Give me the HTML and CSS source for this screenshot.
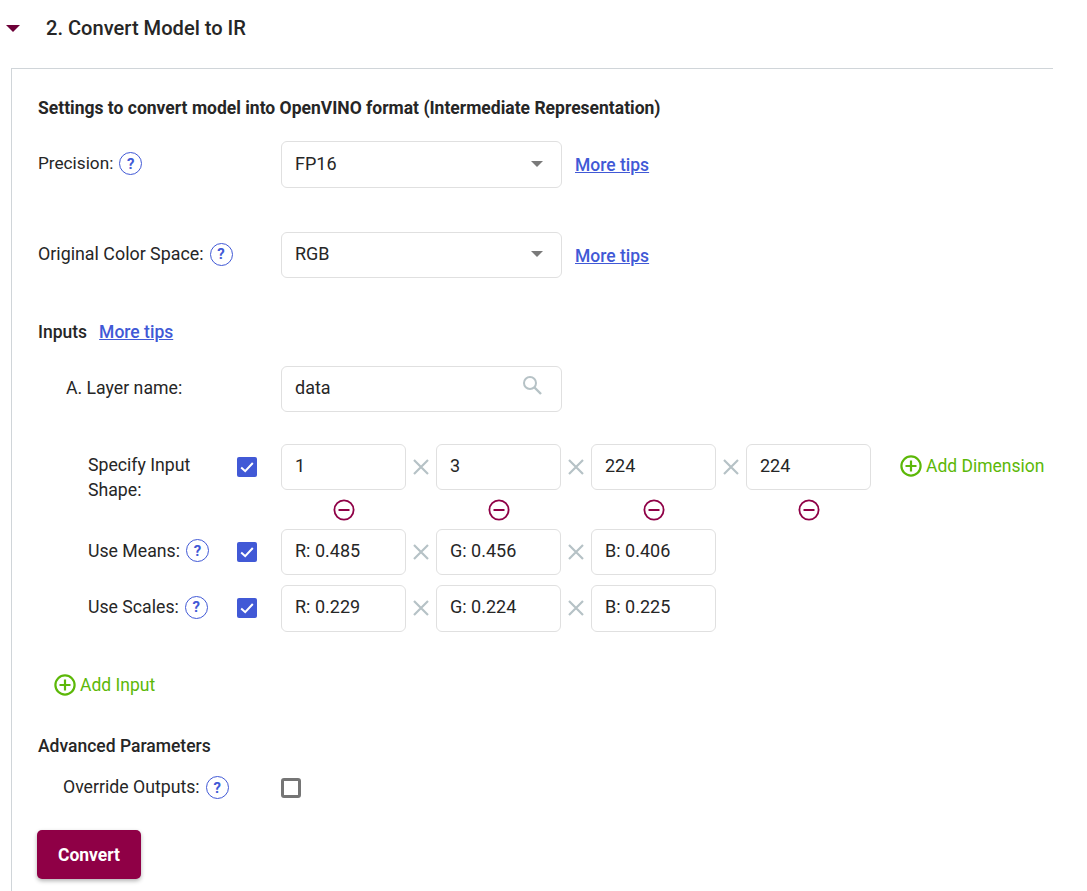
FILE: index.html
```html
<!DOCTYPE html>
<html lang="en">
<head>
    <meta charset="UTF-8">
    <title>Convert Model to IR</title>
    <link rel="stylesheet" href="styles.css">
</head>
<body>
    <svg width="0" height="0" class="defs">
        <symbol id="times" viewBox="0 0 16 16">
            <path d="M1 1L15 15M15 1L1 15" stroke="#b6c2c6" stroke-width="2.2" fill="none"/>
        </symbol>
        <symbol id="minus" viewBox="0 0 22 22">
            <circle cx="11" cy="11" r="9.6" fill="none" stroke="#8f0046" stroke-width="1.8"/>
            <path d="M5.5 11H16.5" stroke="#8f0046" stroke-width="2"/>
        </symbol>
        <symbol id="plus" viewBox="0 0 22 22">
            <circle cx="11" cy="11" r="9.6" fill="none" stroke="#5cb808" stroke-width="2.2"/>
            <path d="M5.5 11H16.5M11 5.5V16.5" stroke="#5cb808" stroke-width="2.2"/>
        </symbol>
        <symbol id="tick" viewBox="0 0 20 20">
            <rect width="20" height="20" rx="2" fill="#4159d6"/>
            <path d="M4.2 10.4L8.2 14.2L15.8 6" stroke="#fff" stroke-width="2" fill="none"/>
        </symbol>
    </svg>

    <div class="section-head">
        <span class="caret"></span>
        <h2>2. Convert Model to IR</h2>
    </div>

    <div class="panel">
        <h3 class="panel-title">Settings to convert model into OpenVINO format (Intermediate Representation)</h3>

        <div class="row row-precision">
            <div class="label-col">
                <span class="raised">Precision:</span>
                <span class="help">?</span>
            </div>
            <div class="field select">FP16<span class="arrow"></span></div>
            <a class="tips" href="#">More tips</a>
        </div>

        <div class="row row-color">
            <div class="label-col">
                <span class="raised">Original Color Space:</span>
                <span class="help">?</span>
            </div>
            <div class="field select">RGB<span class="arrow"></span></div>
            <a class="tips" href="#">More tips</a>
        </div>

        <div class="inputs-head">
            <span class="medium">Inputs</span>
            <a class="tips" href="#">More tips</a>
        </div>

        <div class="row row-layer">
            <div class="label-col indent-a"><span class="raised">A.&nbsp;Layer name:</span></div>
            <div class="field select">data
                <svg class="search" viewBox="0 0 20 20">
                    <circle cx="8" cy="8" r="6" fill="none" stroke="#b6c2c6" stroke-width="2"/>
                    <path d="M12.5 12.5L19 19" stroke="#b6c2c6" stroke-width="2.4"/>
                </svg>
            </div>
        </div>

        <div class="row row-shape">
            <div class="label-col indent-b">
                <span class="shape-label">Specify Input Shape:</span>
                <svg class="check"><use href="#tick"/></svg>
            </div>
            <div class="dims">
                <div class="dim">
                    <div class="field small">1</div>
                    <svg class="remove"><use href="#minus"/></svg>
                </div>
                <svg class="times"><use href="#times"/></svg>
                <div class="dim">
                    <div class="field small">3</div>
                    <svg class="remove"><use href="#minus"/></svg>
                </div>
                <svg class="times"><use href="#times"/></svg>
                <div class="dim">
                    <div class="field small">224</div>
                    <svg class="remove"><use href="#minus"/></svg>
                </div>
                <svg class="times"><use href="#times"/></svg>
                <div class="dim">
                    <div class="field small">224</div>
                    <svg class="remove"><use href="#minus"/></svg>
                </div>
            </div>
            <div class="add add-dim">
                <svg class="plus"><use href="#plus"/></svg>
                <span>Add Dimension</span>
            </div>
        </div>

        <div class="row row-means">
            <div class="label-col indent-b">
                <span class="name-label">Use Means:<span class="help">?</span></span>
                <svg class="check"><use href="#tick"/></svg>
            </div>
            <div class="dims">
                <div class="field small">R: 0.485</div>
                <svg class="times"><use href="#times"/></svg>
                <div class="field small">G: 0.456</div>
                <svg class="times"><use href="#times"/></svg>
                <div class="field small">B: 0.406</div>
            </div>
        </div>

        <div class="row row-scales">
            <div class="label-col indent-b">
                <span class="name-label">Use Scales:<span class="help">?</span></span>
                <svg class="check"><use href="#tick"/></svg>
            </div>
            <div class="dims">
                <div class="field small">R: 0.229</div>
                <svg class="times"><use href="#times"/></svg>
                <div class="field small">G: 0.224</div>
                <svg class="times"><use href="#times"/></svg>
                <div class="field small">B: 0.225</div>
            </div>
        </div>

        <div class="add add-input">
            <svg class="plus"><use href="#plus"/></svg>
            <span>Add Input</span>
        </div>

        <div class="advanced medium">Advanced Parameters</div>

        <div class="row row-override">
            <div class="label-col indent-c">
                <span>Override Outputs:</span>
                <span class="help">?</span>
            </div>
            <span class="empty-check"></span>
        </div>

        <button class="convert" type="button">Convert</button>
    </div>
</body>
</html>
```
FILE: styles.css
```css
html,
body {
    height: 891px;
    overflow: hidden;
}

body {
    font-family: Roboto, "Liberation Sans", sans-serif;
    font-size: 17.7px;
    color: #262626;
    background-color: #fff;
    margin: 0;
    padding: 0;
}

.defs {
    display: block;
    height: 0;
}

.section-head {
    display: flex;
    align-items: center;
    height: 56px;
}

.caret {
    width: 0;
    height: 0;
    margin-left: 6px;
    border-left: 7px solid transparent;
    border-right: 7px solid transparent;
    border-top: 7px solid #6d0038;
}

.section-head h2 {
    margin: 0 0 0 26px;
    font-size: 20.1px;
    font-weight: 500;
}

.panel {
    margin: 12px 34px 0 11px;
    padding: 28px 0 0 26px;
    height: 830px;
    border-top: 1px solid #d0d5d9;
    border-left: 1px solid #d0d5d9;
}

.panel-title {
    margin: 0;
    font-size: 17.5px;
    font-weight: 700;
    line-height: 22px;
}

.row {
    display: flex;
    align-items: center;
}

.row-precision {
    margin-top: 22px;
}

.row-precision .field {
    height: 47px;
    line-height: 44px;
}

.row-precision .raised {
    font-size: 17.2px;
}

.row-color {
    margin-top: 44px;
}

.row-color .raised {
    font-size: 17.85px;
}

.row-color .tips {
    margin-top: 2px;
}

.row-color .arrow {
    top: 18px;
}

.row-shape {
    align-items: flex-start;
    margin-top: 32px;
}

.row-means {
    align-items: flex-start;
}

.row-means .name-label {
    height: 43px;
}

.row-scales {
    margin-top: 10px;
    align-items: flex-start;
}

.row-scales .small {
    height: 47px;
}

.row-override {
    margin-top: 17px;
}

.row-override .help {
    margin-top: 1px;
}

.label-col {
    display: flex;
    align-items: center;
    flex: 0 0 243px;
    box-sizing: border-box;
}

.raised {
    margin-top: -3px;
}

.label-col > .raised + .help {
    margin-top: -2px;
}

.indent-a {
    padding-left: 28px;
}

.indent-b {
    padding-left: 50px;
    align-items: flex-start;
}

.indent-c {
    padding-left: 25px;
}

.shape-label {
    width: 149px;
    line-height: 25px;
    padding-top: 9px;
}

.name-label {
    display: flex;
    align-items: center;
    width: 149px;
    height: 44px;
}

.help {
    display: flex;
    align-items: center;
    justify-content: center;
    box-sizing: border-box;
    width: 23px;
    height: 23px;
    margin-left: 6px;
    flex: none;
    border: 1.8px solid #4159d6;
    border-radius: 50%;
    color: #4159d6;
    font-size: 15px;
    font-weight: 700;
}

.check {
    width: 20px;
    height: 20px;
    margin-top: 13px;
    flex: none;
}

.field {
    box-sizing: border-box;
    border: 1px solid #e0e0e0;
    border-radius: 6px;
    background-color: #fff;
    padding: 0 13px;
    height: 46px;
    font-size: 18px;
    line-height: 42px;
    flex: none;
}

.select {
    position: relative;
    width: 281px;
}

.arrow {
    position: absolute;
    right: 18px;
    top: 19px;
    width: 0;
    height: 0;
    border-left: 6.5px solid transparent;
    border-right: 6.5px solid transparent;
    border-top: 6.5px solid #7a7a7a;
}

.search {
    position: absolute;
    right: 19px;
    top: 8px;
    width: 20px;
    height: 20px;
}

.small {
    width: 125px;
}

.tips {
    color: #4159d6;
    font-weight: 500;
    font-size: 17.5px;
}

.row .tips {
    margin-left: 13px;
}

.inputs-head {
    display: flex;
    align-items: center;
    gap: 12px;
    margin-top: 42px;
    height: 24px;
    margin-bottom: 22px;
}

.medium {
    font-weight: 500;
    font-size: 17.5px;
}

.dims {
    display: flex;
    align-items: flex-start;
    flex: none;
}

.dim {
    display: flex;
    flex-direction: column;
    align-items: center;
    width: 125px;
}

.times {
    width: 16px;
    height: 16px;
    margin: 15px 7px 0;
    flex: none;
}

.remove {
    width: 22px;
    height: 22px;
    margin: 9px 0 8px;
}

.plus {
    width: 22px;
    height: 22px;
    flex: none;
}

.add {
    display: flex;
    align-items: center;
    gap: 4px;
    color: #5cb808;
    font-size: 17.5px;
}

.add-dim {
    margin: 11px 0 0 29px;
    white-space: nowrap;
}

.add-input {
    margin: 42px 0 0 16px;
}

.advanced {
    margin-top: 38px;
    line-height: 24px;
}

.empty-check {
    box-sizing: border-box;
    width: 20px;
    height: 20px;
    margin-top: 2px;
    border: 3px solid #757575;
    border-radius: 3px;
}

.convert {
    display: block;
    width: 104px;
    height: 49px;
    margin: 31px 0 0 -1px;
    padding-top: 2px;
    border: none;
    border-radius: 5px;
    background-color: #8f0046;
    color: #fff;
    font-family: Roboto, "Liberation Sans", sans-serif;
    font-size: 17.5px;
    font-weight: 700;
    box-shadow: 0 2px 4px rgba(0, 0, 0, 0.3);
}
```
